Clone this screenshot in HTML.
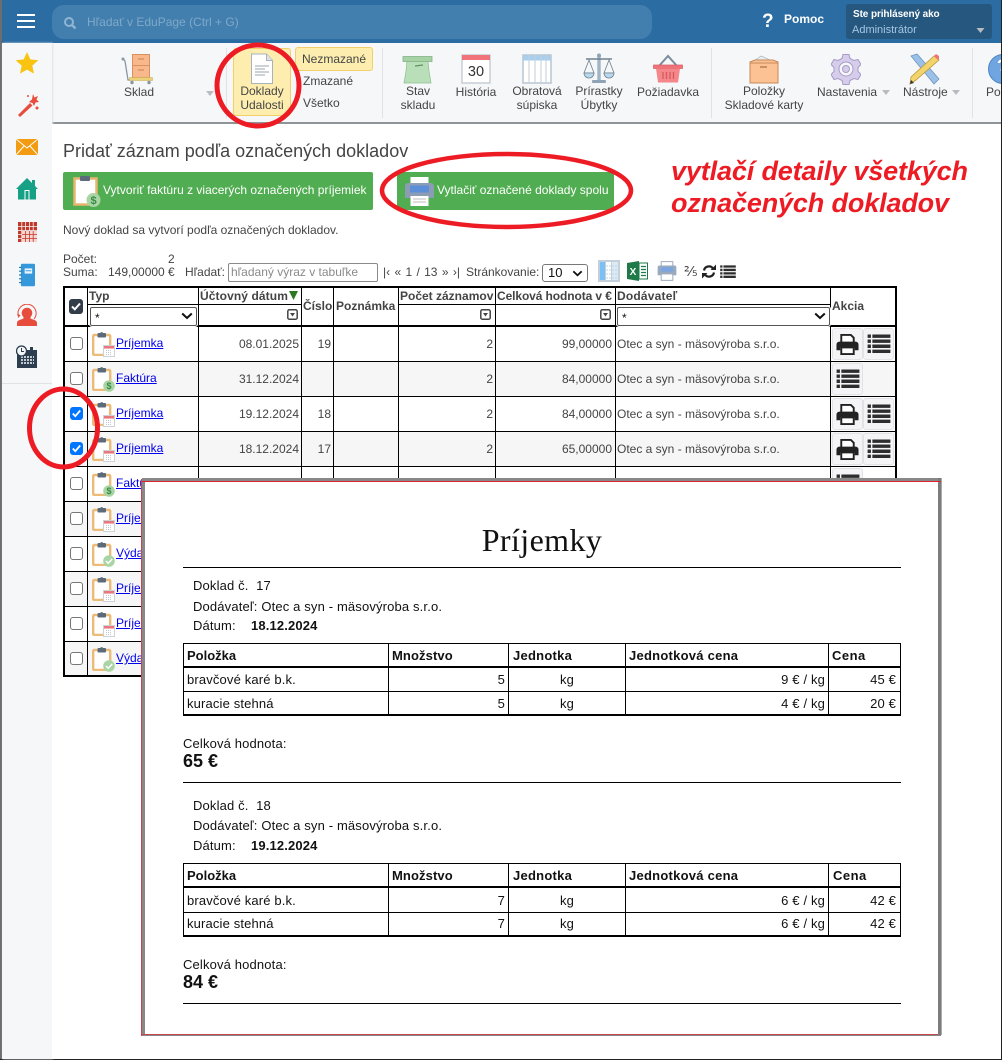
<!DOCTYPE html>
<html lang="sk"><head><meta charset="utf-8"><title>Príjemky</title>
<style>
html,body{margin:0;padding:0;background:#fff}
#p{position:relative;width:1003px;height:1060px;overflow:hidden;background:#fff;font:12px/16px "Liberation Sans",sans-serif;color:#444}
#p div,#p span.t,#p svg,#p a.t{position:absolute}
.t{white-space:nowrap}
.c{transform:translateX(-50%);text-align:center}
.r{transform:translateX(-100%)}
.b{font-weight:bold}
.ln{background:#000}
.row{left:63px;width:834px;height:35px}
.alt{background:#f6f6f6}
.cb{left:7px;top:11px;width:11px;height:11px;border:1.5px solid #767676;border-radius:3px;background:#fff}
.cb.on{background:#0075ff;border-color:#0075ff}
.lk{left:53px;top:9px;color:#00e;text-decoration:underline}
.act{width:29px;height:30px;top:2px;background:#f4f4f7;border:1px solid #e2e2e6;border-radius:3px}
.sel{height:17px;background:#fff;border:1px solid #555;border-radius:2px;box-shadow:0 0 0 1px #fff}
.blk{color:#111}
.m{font-size:13px;letter-spacing:.15px}
</style></head><body>
<div id="p">
<svg width="0" height="0" style="position:absolute">
<defs>
<symbol id="clip" viewBox="0 0 24 24"><rect x="1.200" y="3" width="17" height="20" rx="1" fill="#fff" stroke="#ecbb78" stroke-width="2.400"/><rect x="5.500" y="1" width="8.500" height="4.500" rx="1" fill="#5c6b7c"/><circle cx="9.700" cy="1.600" r="1.500" fill="#5c6b7c"/></symbol>
<symbol id="cal" viewBox="0 0 12 12"><rect x=".5" y=".5" width="11" height="11" fill="#fff" stroke="#ccd2d8"/><rect x="1" y="1" width="10" height="2.600" fill="#e8787c"/><path d="M3 5.500h6M3 7.500h6M3 9.500h6" stroke="#bfc8cf" stroke-dasharray="1 1"/></symbol>
<symbol id="dol" viewBox="0 0 12 12"><circle cx="6" cy="6" r="5.800" fill="#a9d5a5"/><text x="6" y="9.200" font-size="9" font-weight="bold" text-anchor="middle" fill="#3b8a46" font-family="Liberation Sans">$</text></symbol>
<symbol id="chk" viewBox="0 0 12 12"><circle cx="6" cy="6" r="5.800" fill="#a9d5a5"/><path d="M3 6l2.200 2.300L9.200 4" fill="none" stroke="#fff" stroke-width="1.500"/></symbol>
<symbol id="prt" viewBox="0 0 24 24"><path d="M5.500 10V2h10l3 3v5" fill="#fff" stroke="#222" stroke-width="2"/><path d="M3.500 9h17a3 3 0 0 1 3 3v6h-4v-3H4.500v3H.5v-6a3 3 0 0 1 3-3z" fill="#222"/><path d="M5.500 15h13v7h-13z" fill="#fff" stroke="#222" stroke-width="2"/></symbol>
<symbol id="lst" viewBox="0 0 24 20"><path d="M0 .5h3.500v3.600H0zM0 5.800h3.500v3.600H0zM0 11.100h3.500v3.600H0zM0 16.400h3.500v3.600H0zM5 .5h19v3.600H5zM5 5.800h19v3.600H5zM5 11.100h19v3.600H5zM5 16.400h19v3.600H5z" fill="#2d2d2d"/></symbol>
<symbol id="flt" viewBox="0 0 11 11"><rect x=".8" y=".8" width="9.400" height="9.400" rx="1.500" fill="#fff" stroke="#444" stroke-width="1.500"/><path d="M3 4h5L5.500 7.500z" fill="#444"/></symbol>
<symbol id="chev" viewBox="0 0 12 8"><path d="M1.200 1.500L6 6l4.800-4.500" fill="none" stroke="#111" stroke-width="2"/></symbol>
<symbol id="mini" viewBox="0 0 8 5"><path d="M0 0h8L4 5z" fill="#b8bcc0"/></symbol>
</defs></svg>

<!-- frame -->
<div style="left:0;top:0;width:2px;height:1060px;background:#6d6d6d"></div>
<div style="left:1001px;top:0;width:1px;height:1060px;background:#222"></div>
<div style="left:0;top:1059px;width:1003px;height:1px;background:#222"></div>

<!-- top bar -->
<div style="left:2px;top:0;width:999px;height:43px;background:#2b6ca3"></div>
<div style="left:17px;top:14px;width:18px;height:2px;background:#fff"></div>
<div style="left:17px;top:20px;width:18px;height:2px;background:#fff"></div>
<div style="left:17px;top:26px;width:18px;height:2px;background:#fff"></div>
<div style="left:52px;top:5px;width:600px;height:34px;background:#427fae;border-radius:12px"></div>
<svg style="left:63px;top:16px" width="14" height="14" viewBox="0 0 14 14"><circle cx="6" cy="6" r="4" fill="none" stroke="#8fb5d2" stroke-width="2"/><path d="M9 9l3.500 3.500" stroke="#8fb5d2" stroke-width="2.500"/></svg>
<span class="t" style="left:87px;top:14px;color:#7fa9c9">Hľadať v EduPage (Ctrl + G)</span>
<span class="t b" style="left:762px;top:11px;color:#fff;font-size:19px;line-height:22px">?</span>
<span class="t b" style="left:784px;top:11px;color:#fff">Pomoc</span>
<div style="left:846px;top:4px;width:146px;height:35px;background:#25577f;border-radius:3px"></div>
<span class="t b" style="left:853px;top:7px;color:#fff;font-size:10px;letter-spacing:-.1px">Ste prihlásený ako</span>
<span class="t" style="left:852px;top:22px;color:#a6c6e6;font-size:11px">Administrátor</span>
<svg style="left:976px;top:28px" width="9" height="5"><use href="#mini"/></svg>

<!-- toolbar -->
<div style="left:2px;top:43px;width:999px;height:80px;background:#f5f7f9"></div>
<div style="left:2px;top:122px;width:999px;height:2px;background:#8f9499"></div>
<div style="left:2px;top:43px;width:50px;height:1016px;background:#f5f7f9;box-shadow:1px 0 2px #dfe1e4"></div>
<div style="left:52px;top:124px;width:949px;height:935px;background:#fff"></div>
<div style="left:2px;top:383px;width:50px;height:1px;background:#dfe2e5"></div>
<div style="left:226px;top:48px;width:1px;height:70px;background:#e0e3e6"></div>
<div style="left:382px;top:48px;width:1px;height:70px;background:#e0e3e6"></div>
<div style="left:711px;top:48px;width:1px;height:70px;background:#e0e3e6"></div>
<div style="left:972px;top:48px;width:1px;height:70px;background:#e0e3e6"></div>

<!-- Sklad -->
<svg style="left:120px;top:52px" width="34" height="33" viewBox="0 0 34 33"><path d="M3 7l2 2 3 19 2 0" fill="none" stroke="#8b96a3" stroke-width="1.300"/><circle cx="3" cy="7" r="1.500" fill="#8b96a3"/><rect x="12.500" y="2.500" width="17" height="11" fill="#f9b88c" stroke="#d9925f"/><rect x="12.500" y="13.500" width="17" height="12" fill="#f9b88c" stroke="#d9925f"/><path d="M18 7h6M18 18h6" stroke="#c57f50"/><rect x="9.500" y="25.500" width="23" height="3" fill="#ecd178" stroke="#c9ad55" stroke-width=".5"/><circle cx="12" cy="30.500" r="1.700" fill="#8b96a3"/><circle cx="29" cy="30.500" r="1.700" fill="#8b96a3"/></svg>
<span class="t c" style="left:139px;top:84px">Sklad</span>
<svg style="left:206px;top:91px" width="8" height="5"><use href="#mini"/></svg>

<!-- Doklady -->
<div style="left:233px;top:48px;width:56px;height:66px;background:#fdeeb0;border:1px solid #f3cf6b;border-radius:3px"></div>
<svg style="left:250px;top:53px" width="24" height="32" viewBox="0 0 24 32"><path d="M1.500 1h15l6 6.500V30.500h-21z" fill="#fff" stroke="#a9b2bb"/><path d="M16.500 1v6.500h6" fill="#dfe3e7" stroke="#a9b2bb"/><path d="M5 13h14M5 16h10M5 19h14M5 22h10" stroke="#9aa4ae"/></svg>
<span class="t c" style="left:262px;top:84px;line-height:14px">Doklady<br>Udalosti</span>
<div style="left:295px;top:47px;width:76px;height:22px;background:#fdeeb0;border:1px solid #f3cf6b;border-radius:3px"></div>
<span class="t" style="left:302px;top:51px">Nezmazané</span>
<span class="t" style="left:303px;top:73px">Zmazané</span>
<span class="t" style="left:303px;top:95px">Všetko</span>

<!-- Stav skladu -->
<svg style="left:402px;top:55px" width="31" height="29" viewBox="0 0 31 29"><path d="M5 6h21l1 10 2 12H2l2-12z" fill="#b9dfb8" stroke="#8fbd90" stroke-width=".7"/><rect x="1" y="1.500" width="29" height="5" fill="#a6d2a6" stroke="#84b285" stroke-width=".8"/><path d="M13 11l8-1" stroke="#5f9363" stroke-width="1.200"/></svg>
<span class="t c" style="left:418px;top:84px;line-height:14px">Stav<br>skladu</span>
<!-- História -->
<svg style="left:461px;top:54px" width="30" height="30" viewBox="0 0 30 30"><rect x="1" y="1" width="28" height="28" fill="#fff" stroke="#c5ced6" stroke-width="1.500"/><rect x="1" y="1" width="28" height="5" fill="#ef7378"/><text x="15" y="22" font-size="14.500" text-anchor="middle" fill="#333" font-family="Liberation Sans">30</text></svg>
<span class="t c" style="left:476px;top:84px">História</span>
<!-- Obratova -->
<svg style="left:522px;top:54px" width="30" height="30" viewBox="0 0 30 30"><rect x="1" y="1" width="28" height="28" fill="#fff" stroke="#b9c6d2" stroke-width="1.500"/><rect x="1.500" y="1.500" width="27" height="5" fill="#a8d0ee"/><path d="M7 1v28M13 1v28M19 1v28M24 1v28" stroke="#c3ceda"/></svg>
<span class="t c" style="left:537px;top:84px;line-height:14px">Obratová<br>súpiska</span>
<!-- Scales -->
<svg style="left:583px;top:53px" width="32" height="32" viewBox="0 0 32 32"><rect x="14.300" y="3" width="3.400" height="25" fill="#9fb4c6"/><circle cx="16" cy="2.500" r="2" fill="#8ea3b5"/><rect x="9" y="27" width="14" height="3" rx="1" fill="#8ea3b5"/><path d="M3 6h26" stroke="#71808e" stroke-width="1.500"/><path d="M6 7L1 20h10zM26 7l-5 13h10z" fill="none" stroke="#71808e" stroke-width=".8"/><path d="M1 20a5 5 0 0 0 10 0zM21 20a5 5 0 0 0 10 0z" fill="#b8d8ee" stroke="#71808e" stroke-width=".8"/></svg>
<span class="t c" style="left:599px;top:84px;line-height:14px">Prírastky<br>Úbytky</span>
<!-- Basket -->
<svg style="left:653px;top:54px" width="30" height="30" viewBox="0 0 30 30"><path d="M6 12L15 2l9 10" fill="none" stroke="#7c8c9b" stroke-width="2"/><rect x="0.500" y="11" width="29" height="3.500" fill="#ef7378" stroke="#d85d62" stroke-width=".7"/><path d="M3 14.500h24l-2 14H5z" fill="#f58689"/><path d="M10 18v7M13.500 18v7M17 18v7M20.500 18v7" stroke="#d45a5f" stroke-width="1.300"/></svg>
<span class="t c" style="left:668px;top:84px">Požiadavka</span>
<!-- Box -->
<svg style="left:749px;top:54px" width="30" height="30" viewBox="0 0 30 30"><path d="M5 7l7-5 7 3 5 3z" fill="#e9edf1" stroke="#a9b2bb" stroke-width=".7"/><path d="M1 8l5-2h18l5 2v21H1z" fill="#fcc294" stroke="#c68858"/><path d="M1 9h28" stroke="#c68858"/><path d="M11 13h7" stroke="#b0764a" stroke-width="1.300"/></svg>
<span class="t c" style="left:764px;top:84px;line-height:14px">Položky<br>Skladové karty</span>
<!-- Gear -->
<svg style="left:831px;top:53px" width="30" height="32" viewBox="0 0 30 32"><path d="M12 1h6l1 4 4 2 4-1 3 5-3 3v4l3 3-3 5-4-1-4 2-1 4h-6l-1-4-4-2-4 1-3-5 3-3v-4L0 11l3-5 4 1 4-2z" transform="translate(0 .5)" fill="#d6cdea" stroke="#a89bc8"/><circle cx="15" cy="16" r="7" fill="#f5f7f9" stroke="#a89bc8"/><circle cx="15" cy="16" r="3.500" fill="#d6cdea" stroke="#a89bc8"/></svg>
<span class="t" style="left:817px;top:84px">Nastavenia</span>
<svg style="left:882px;top:90px" width="8" height="5"><use href="#mini"/></svg>
<!-- Tools -->
<svg style="left:908px;top:53px" width="32" height="32" viewBox="0 0 32 32"><path d="M3 3l6-2 22 25-5 5z" fill="#9cc1e8" stroke="#6f96bf" stroke-width=".8"/><path d="M26 3l5 4L8 27l-6 4 1-7z" fill="#f3d36b" stroke="#b99a3d" stroke-width=".8"/><path d="M26 3l2-2 3 2 0 3-1 1z" fill="#ef7378"/><path d="M2 31l1-4 3 3z" fill="#333"/></svg>
<span class="t" style="left:903px;top:84px">Nástroje</span>
<svg style="left:952px;top:90px" width="8" height="5"><use href="#mini"/></svg>
<!-- Pomoc clip -->
<div style="left:988px;top:54px;width:30px;height:30px;border-radius:50%;background:#6fa5e0;border:1px solid #4d86c4;box-sizing:border-box"></div>
<span class="t b" style="left:997px;top:56px;color:#fff;font-size:17px;line-height:20px">?</span>
<span class="t" style="left:986px;top:84px">Po</span>
<div style="left:1001px;top:43px;width:2px;height:1017px;background:#fff"></div>
<div style="left:1001px;top:0;width:1px;height:1060px;background:#222"></div>

<!-- sidebar -->
<svg style="left:15px;top:51px" width="24" height="24" viewBox="0 0 24 24"><path d="M12 1l3.300 7.400 8 .8-6 5.400 1.700 8L12 18.600 5 22.600l1.700-8-6-5.400 8-.8z" fill="#f9c311"/></svg>
<svg style="left:16px;top:93px" width="24" height="24" viewBox="0 0 24 24"><path d="M2 22L14 10l2.500 2.500L4 24z" fill="#e74c3c"/><path d="M17 1l1.500 3.500L22 3l-1.500 3.500L23 9l-3.500.5L18 13l-1.500-3L13 9l3-2.500z" fill="#e74c3c"/><circle cx="21" cy="15" r="1.500" fill="#e74c3c"/><circle cx="12" cy="3" r="1" fill="#e74c3c"/></svg>
<svg style="left:16px;top:139px" width="22" height="16" viewBox="0 0 22 16"><rect width="22" height="16" fill="#f39c12"/><path d="M0 0l11 9L22 0M0 16l8-9M22 16l-8-9" fill="none" stroke="#fff" stroke-width="1"/></svg>
<svg style="left:16px;top:178px" width="22" height="22" viewBox="0 0 22 22"><path d="M0 11L11 0l5 5V2h3v6l3 3h-2v10.500H2V11z" fill="#16a085"/><rect x="8.500" y="12" width="5" height="9.500" fill="#fff"/><rect x="9.500" y="13" width="3" height="8.500" fill="#16a085"/></svg>
<svg style="left:18px;top:222px" width="19" height="20" viewBox="0 0 19 20"><rect width="19" height="20" fill="#c0392b"/><path d="M0 4.500h19M0 8.500h19M0 12.500h19M0 16.500h19M3.800 0v20M7.600 0v20M11.400 0v20M15.200 0v20" stroke="#f5f7f9" stroke-width=".8"/><rect x="4" y="9" width="15" height="11" fill="#f6d5d1"/><path d="M4 12.500h15M4 16.500h15M7.600 9v11M11.400 9v11M15.200 9v11" stroke="#c0392b" stroke-width=".8"/></svg>
<svg style="left:19px;top:263px" width="16" height="24" viewBox="0 0 17 24"><rect x="2" y="0" width="15" height="24" rx="1.500" fill="#3498db"/><path d="M0 4h3M0 8h3M0 12h3M0 16h3M0 20h3" stroke="#2a78ad" stroke-width="1.200"/><rect x="6" y="5" width="8" height="5.500" fill="#eaf4fb"/><path d="M7 7.500h6" stroke="#3498db"/></svg>
<svg style="left:17px;top:304px" width="20" height="22" viewBox="0 0 20 22"><path d="M1.500 12A9 9 0 1 1 17 15" fill="none" stroke="#e74c3c" stroke-width="1"/><path d="M0 10l3.500 1-2 3z" fill="#e74c3c"/><circle cx="10" cy="9" r="5.300" fill="#e74c3c"/><path d="M0 22v-3c0-3 4.500-3.500 6.500-4.500v-2h7v2c2 1 6.500 1.500 6.500 4.500v3z" fill="#e74c3c"/></svg>
<svg style="left:16px;top:345px" width="22" height="23" viewBox="0 0 22 23"><rect x="1" y="5" width="20" height="18" fill="#2c3e50"/><rect x="14" y="2" width="3" height="5" fill="#2c3e50"/><path d="M5 12h13M5 15h13M5 18h13" stroke="#c3cad1" stroke-width="2" stroke-dasharray="2 1"/><circle cx="5.500" cy="6" r="5" fill="#f5f7f9" stroke="#2c3e50" stroke-width="1.300"/><path d="M5.500 3v3.500H8" fill="none" stroke="#2c3e50"/></svg>

<!-- heading -->
<span class="t" style="left:63px;top:141px;font-size:18px;line-height:21px">Pridať záznam podľa označených dokladov</span>

<div style="left:63px;top:172px;width:310px;height:38px;background:#51ad51;border-radius:2px"></div>
<svg style="left:73px;top:175px" width="28" height="33" viewBox="0 0 28 33"><rect x="1.500" y="3.500" width="22" height="26" fill="#fff" stroke="#e9b56e" stroke-width="2.500"/><rect x="7" y="1" width="10" height="5" rx="1" fill="#5c6b7c"/><circle cx="20.500" cy="25" r="7" fill="#a9d5a5"/><text x="20.500" y="29" font-size="11" font-weight="bold" text-anchor="middle" fill="#3b8a46" font-family="Liberation Sans">$</text></svg>
<span class="t" style="left:103px;top:182px;color:#fff">Vytvoriť faktúru z viacerých označených príjemiek</span>

<div style="left:397px;top:172px;width:217px;height:38px;background:#51ad51;border-radius:2px"></div>
<svg style="left:404px;top:176px" width="31" height="31" viewBox="0 0 31 31"><rect x="6.500" y="1" width="18" height="10" fill="#fff"/><path d="M4 7h23a3 3 0 0 1 3 3v12H1V10a3 3 0 0 1 3-3z" fill="#8b9cb4"/><rect x="6" y="9.500" width="19" height="7" fill="#5d8fd8"/><rect x="6.500" y="20" width="18" height="10" fill="#fff"/><path d="M9 23h13M9 26h13" stroke="#bbb"/></svg>
<span class="t" style="left:437px;top:182px;color:#fff">Vytlačiť označené doklady spolu</span>

<span class="t b" style="left:671px;top:155px;font-size:27px;line-height:32px;font-style:italic;color:#ed1c24;letter-spacing:-.14px">vytlačí detaily všetkých</span>
<span class="t b" style="left:671px;top:187px;font-size:27px;line-height:32px;font-style:italic;color:#ed1c24;letter-spacing:-.14px">označených dokladov</span>

<span class="t" style="left:63px;top:222px">Nový doklad sa vytvorí podľa označených dokladov.</span>

<span class="t" style="left:63px;top:251px">Počet:</span>
<span class="t" style="left:168px;top:251px">2</span>
<span class="t" style="left:63px;top:264px">Suma:</span>
<span class="t" style="left:108px;top:264px">149,00000 €</span>
<span class="t" style="left:185px;top:264px">Hľadať:</span>
<div style="left:228px;top:263px;width:148px;height:17px;border:1px solid #8a8a8a;border-radius:2px"></div>
<span class="t" style="left:231px;top:264px;color:#8a8a8a">hľadaný výraz v tabuľke</span>
<span class="t" style="left:383px;top:264px;word-spacing:1px">|‹ « 1 / 13 » ›|</span>
<span class="t" style="left:466px;top:264px">Stránkovanie:</span>
<div style="left:542px;top:264px;width:44px;height:16px;border:1px solid #777;border-radius:3px"></div>
<span class="t blk" style="left:548px;top:265px;font-size:13px">10</span>
<svg style="left:572px;top:270px" width="11" height="7"><use href="#chev"/></svg>

<svg style="left:598px;top:260px" width="22" height="22" viewBox="0 0 22 22"><rect width="22" height="22" fill="#c3d0dc"/><rect x="2" y="2" width="5" height="18" fill="#7cc0f5"/><rect x="8" y="2" width="5" height="18" fill="#fff"/><rect x="14" y="2" width="6" height="18" fill="#dce8f2"/><path d="M8 6h12M8 10h12M8 14h12M8 18h12" stroke="#b9d6ee" stroke-dasharray="2 1"/></svg>
<svg style="left:627px;top:261px" width="21" height="20" viewBox="0 0 21 20"><path d="M0 2l12-2v20L0 18z" fill="#1f7a4a"/><rect x="12" y="2" width="8.500" height="16" fill="#fff" stroke="#1f7a4a"/><path d="M14 5.500h5M14 8.500h5M14 11.500h5M14 14.500h5" stroke="#1f7a4a" stroke-width="1.300"/><text x="6" y="14" font-size="10" font-weight="bold" text-anchor="middle" fill="#fff" font-family="Liberation Sans">X</text></svg>
<svg style="left:657px;top:261px" width="20" height="20" viewBox="0 0 31 31"><rect x="6.500" y="1" width="18" height="10" fill="#fff" stroke="#9aa9bb" stroke-width="1.500"/><path d="M4 7h23a3 3 0 0 1 3 3v12H1V10a3 3 0 0 1 3-3z" fill="#9aa9bb"/><rect x="6" y="9.500" width="19" height="7" fill="#7aa5e0"/><rect x="6.500" y="20" width="18" height="10" fill="#fff" stroke="#9aa9bb" stroke-width="1.500"/></svg>
<span class="t" style="left:684px;top:263px;font-size:14px;color:#444">⅖</span>
<svg style="left:702px;top:264px" width="14" height="15" viewBox="0 0 14 14"><path d="M2 6a5 5 0 0 1 9-2M12 8a5 5 0 0 1-9 2" fill="none" stroke="#222" stroke-width="2.200"/><path d="M8.500 5.500H14V0zM5.500 8.500H0V14z" fill="#222"/></svg>
<svg style="left:720px;top:265px" width="16" height="13"><use href="#lst"/></svg>

<!-- main table rows -->
<div class="row" style="top:326px"><div class="cb" style="left:7px"></div><svg style="left:29px;top:6px" width="24" height="24"><use href="#clip"/></svg><svg style="left:40px;top:19px" width="12" height="12"><use href="#cal"/></svg><a class="t lk">Príjemka</a><span class="t r" style="left:236px;top:10px">08.01.2025</span><span class="t r" style="left:268px;top:10px">19</span><span class="t r" style="left:430px;top:10px">2</span><span class="t r" style="left:549px;top:10px">99,00000</span><span class="t" style="left:554px;top:10px">Otec a syn - mäsovýroba s.r.o.</span><div class="act" style="left:769px"><svg style="left:3px;top:4px" width="23" height="23"><use href="#prt"/></svg></div><div class="act" style="left:800px"><svg style="left:3px;top:5px" width="24" height="19"><use href="#lst"/></svg></div></div>

<div class="row alt" style="top:361px"><div class="cb"></div><svg style="left:29px;top:6px" width="24" height="24"><use href="#clip"/></svg><svg style="left:40px;top:19px" width="12" height="12"><use href="#dol"/></svg><a class="t lk">Faktúra</a><span class="t r" style="left:236px;top:10px">31.12.2024</span><span class="t r" style="left:430px;top:10px">2</span><span class="t r" style="left:549px;top:10px">84,00000</span><span class="t" style="left:554px;top:10px">Otec a syn - mäsovýroba s.r.o.</span><div class="act" style="left:769px"><svg style="left:3px;top:5px" width="24" height="19"><use href="#lst"/></svg></div></div>

<div class="row" style="top:396px"><div class="cb on"><svg style="left:1px;top:1px" width="9" height="9" viewBox="0 0 9 9"><path d="M.8 4.500l2.500 2.700L8.200 1.500" fill="none" stroke="#fff" stroke-width="1.800"/></svg></div><svg style="left:29px;top:6px" width="24" height="24"><use href="#clip"/></svg><svg style="left:40px;top:19px" width="12" height="12"><use href="#cal"/></svg><a class="t lk">Príjemka</a><span class="t r" style="left:236px;top:10px">19.12.2024</span><span class="t r" style="left:268px;top:10px">18</span><span class="t r" style="left:430px;top:10px">2</span><span class="t r" style="left:549px;top:10px">84,00000</span><span class="t" style="left:554px;top:10px">Otec a syn - mäsovýroba s.r.o.</span><div class="act" style="left:769px"><svg style="left:3px;top:4px" width="23" height="23"><use href="#prt"/></svg></div><div class="act" style="left:800px"><svg style="left:3px;top:5px" width="24" height="19"><use href="#lst"/></svg></div></div>

<div class="row alt" style="top:431px"><div class="cb on"><svg style="left:1px;top:1px" width="9" height="9" viewBox="0 0 9 9"><path d="M.8 4.500l2.500 2.700L8.200 1.500" fill="none" stroke="#fff" stroke-width="1.800"/></svg></div><svg style="left:29px;top:6px" width="24" height="24"><use href="#clip"/></svg><svg style="left:40px;top:19px" width="12" height="12"><use href="#cal"/></svg><a class="t lk">Príjemka</a><span class="t r" style="left:236px;top:10px">18.12.2024</span><span class="t r" style="left:268px;top:10px">17</span><span class="t r" style="left:430px;top:10px">2</span><span class="t r" style="left:549px;top:10px">65,00000</span><span class="t" style="left:554px;top:10px">Otec a syn - mäsovýroba s.r.o.</span><div class="act" style="left:769px"><svg style="left:3px;top:4px" width="23" height="23"><use href="#prt"/></svg></div><div class="act" style="left:800px"><svg style="left:3px;top:5px" width="24" height="19"><use href="#lst"/></svg></div></div>

<div class="row" style="top:466px"><div class="cb"></div><svg style="left:29px;top:6px" width="24" height="24"><use href="#clip"/></svg><svg style="left:40px;top:19px" width="12" height="12"><use href="#dol"/></svg><a class="t lk">Faktúra</a><div class="act" style="left:769px"><svg style="left:3px;top:5px" width="24" height="19"><use href="#lst"/></svg></div></div>

<div class="row alt" style="top:501px"><div class="cb"></div><svg style="left:29px;top:6px" width="24" height="24"><use href="#clip"/></svg><svg style="left:40px;top:19px" width="12" height="12"><use href="#cal"/></svg><a class="t lk">Príjemka</a></div>
<div class="row" style="top:536px"><div class="cb"></div><svg style="left:29px;top:6px" width="24" height="24"><use href="#clip"/></svg><svg style="left:40px;top:19px" width="12" height="12"><use href="#chk"/></svg><a class="t lk">Výdajka</a></div>
<div class="row alt" style="top:571px"><div class="cb"></div><svg style="left:29px;top:6px" width="24" height="24"><use href="#clip"/></svg><svg style="left:40px;top:19px" width="12" height="12"><use href="#cal"/></svg><a class="t lk">Príjemka</a></div>
<div class="row" style="top:606px"><div class="cb"></div><svg style="left:29px;top:6px" width="24" height="24"><use href="#clip"/></svg><svg style="left:40px;top:19px" width="12" height="12"><use href="#cal"/></svg><a class="t lk">Príjemka</a></div>
<div class="row alt" style="top:641px"><div class="cb"></div><svg style="left:29px;top:6px" width="24" height="24"><use href="#clip"/></svg><svg style="left:40px;top:19px" width="12" height="12"><use href="#chk"/></svg><a class="t lk">Výdajka</a></div>

<!-- grid lines -->
<div class="ln" style="left:63px;top:286px;width:834px;height:2px"></div>
<div class="ln" style="left:63px;top:325px;width:834px;height:2px"></div>
<div class="ln" style="left:63px;top:675px;width:834px;height:2px"></div>
<div class="ln" style="left:63px;top:286px;width:2px;height:391px"></div>
<div class="ln" style="left:895px;top:286px;width:2px;height:391px"></div>
<div class="ln" style="left:87px;top:286px;width:1px;height:391px"></div>
<div class="ln" style="left:198px;top:286px;width:1px;height:391px"></div>
<div class="ln" style="left:301px;top:286px;width:1px;height:391px"></div>
<div class="ln" style="left:333px;top:286px;width:1px;height:391px"></div>
<div class="ln" style="left:398px;top:286px;width:1px;height:391px"></div>
<div class="ln" style="left:495px;top:286px;width:1px;height:391px"></div>
<div class="ln" style="left:615px;top:286px;width:1px;height:391px"></div>
<div class="ln" style="left:830px;top:286px;width:1px;height:391px"></div>
<div class="ln" style="left:87px;top:304px;width:111px;height:1px"></div>
<div class="ln" style="left:198px;top:304px;width:103px;height:1px"></div>
<div class="ln" style="left:398px;top:304px;width:432px;height:1px"></div>
<div class="ln" style="left:63px;top:361px;width:834px;height:1px"></div>
<div class="ln" style="left:63px;top:396px;width:834px;height:1px"></div>
<div class="ln" style="left:63px;top:431px;width:834px;height:1px"></div>
<div class="ln" style="left:63px;top:466px;width:834px;height:1px"></div>
<div class="ln" style="left:63px;top:501px;width:834px;height:1px"></div>
<div class="ln" style="left:63px;top:536px;width:834px;height:1px"></div>
<div class="ln" style="left:63px;top:571px;width:834px;height:1px"></div>
<div class="ln" style="left:63px;top:606px;width:834px;height:1px"></div>
<div class="ln" style="left:63px;top:641px;width:834px;height:1px"></div>

<!-- header -->
<div style="left:69px;top:299px;width:14px;height:15px;border-radius:3px;background:#333d47"></div>
<svg style="left:71px;top:302px" width="10" height="9" viewBox="0 0 10 9"><path d="M1 4.500l2.800 2.800L9 1.500" fill="none" stroke="#fff" stroke-width="2"/></svg>
<span class="t b" style="left:89px;top:288px">Typ</span>
<span class="t b" style="left:200px;top:288px;letter-spacing:.1px">Účtovný dátum</span>
<svg style="left:289px;top:291px" width="10" height="9"><path d="M0 0h9L4.500 9z" fill="#2c7a20"/></svg>
<span class="t b" style="left:303px;top:298px">Číslo</span>
<span class="t b" style="left:336px;top:298px">Poznámka</span>
<span class="t b" style="left:400px;top:288px">Počet záznamov</span>
<span class="t b" style="left:497px;top:288px;letter-spacing:-.1px">Celková hodnota v €</span>
<span class="t b" style="left:617px;top:288px;letter-spacing:.2px">Dodávateľ</span>
<span class="t b" style="left:832px;top:298px">Akcia</span>
<div class="sel" style="left:90px;top:307px;width:105px"></div>
<span class="t blk" style="left:95px;top:310px">*</span>
<svg style="left:181px;top:312px" width="12" height="8"><use href="#chev"/></svg>
<svg style="left:287px;top:309px" width="11" height="11"><use href="#flt"/></svg>
<svg style="left:480px;top:309px" width="11" height="11"><use href="#flt"/></svg>
<svg style="left:600px;top:309px" width="11" height="11"><use href="#flt"/></svg>
<div class="sel" style="left:617px;top:307px;width:211px"></div>
<span class="t blk" style="left:622px;top:310px">*</span>
<svg style="left:814px;top:312px" width="12" height="8"><use href="#chev"/></svg>

<!-- popup -->
<div style="left:144px;top:481px;width:794px;height:553px;background:#fff"></div>
<div style="left:142px;top:478px;width:800px;height:4px;background:#888"></div>
<div style="left:142px;top:478px;width:3px;height:558px;background:#888"></div>
<div style="left:141px;top:479px;width:1px;height:557px;background:#c8474f"></div>
<div style="left:938px;top:478px;width:3px;height:557px;background:#7c7c7c"></div>
<div style="left:941px;top:478px;width:1px;height:557px;background:#aaa"></div>
<div style="left:142px;top:1035px;width:799px;height:1px;background:#888"></div>
<div style="left:142px;top:481px;width:799px;height:1px;background:#e0202c"></div>
<div style="left:142px;top:1034px;width:796px;height:1px;background:#c8474f"></div>

<span class="t c" style="left:542px;top:521px;font:32px/38px 'Liberation Serif',serif;color:#111;letter-spacing:.4px">Príjemky</span>
<div class="ln" style="left:183px;top:567px;width:718px;height:1px"></div>

<span class="t blk m" style="left:193px;top:578px">Doklad č.&nbsp; 17</span>
<span class="t blk m" style="left:193px;top:599px">Dodávateľ: Otec a syn - mäsovýroba s.r.o.</span>
<span class="t blk m" style="left:193px;top:618px">Dátum:</span>
<span class="t b blk m" style="left:251px;top:618px">18.12.2024</span>

<div class="ln" style="left:183px;top:643px;width:718px;height:1px"></div>
<div class="ln" style="left:183px;top:666px;width:718px;height:2px"></div>
<div class="ln" style="left:183px;top:691px;width:718px;height:1px"></div>
<div class="ln" style="left:183px;top:714px;width:718px;height:2px"></div>
<div class="ln" style="left:183px;top:643px;width:1px;height:73px"></div>
<div class="ln" style="left:388px;top:643px;width:1px;height:73px"></div>
<div class="ln" style="left:508px;top:643px;width:1px;height:73px"></div>
<div class="ln" style="left:625px;top:643px;width:1px;height:73px"></div>
<div class="ln" style="left:828px;top:643px;width:1px;height:73px"></div>
<div class="ln" style="left:900px;top:643px;width:1px;height:73px"></div>
<span class="t b blk" style="left:187px;top:648px;font-size:13px">Položka</span>
<span class="t b blk" style="left:392px;top:648px;font-size:13px;letter-spacing:.1px">Množstvo</span>
<span class="t b blk" style="left:513px;top:648px;font-size:13px;letter-spacing:.25px">Jednotka</span>
<span class="t b blk" style="left:629px;top:648px;font-size:13px;letter-spacing:.25px">Jednotková cena</span>
<span class="t b blk" style="left:832px;top:648px;font-size:13px;letter-spacing:.5px">Cena</span>
<span class="t blk m" style="left:187px;top:672px">bravčové karé b.k.</span><span class="t r blk m" style="left:505px;top:672px">5</span><span class="t c blk m" style="left:567px;top:672px">kg</span><span class="t r blk m" style="left:825px;top:672px">9 € / kg</span><span class="t r blk m" style="left:896px;top:672px">45 €</span>
<span class="t blk m" style="left:187px;top:696px">kuracie stehná</span><span class="t r blk m" style="left:505px;top:696px">5</span><span class="t c blk m" style="left:567px;top:696px">kg</span><span class="t r blk m" style="left:825px;top:696px">4 € / kg</span><span class="t r blk m" style="left:896px;top:696px">20 €</span>

<span class="t blk m" style="left:183px;top:736px">Celková hodnota:</span>
<span class="t b blk" style="left:183px;top:751px;font-size:18px;line-height:21px">65 €</span>
<div class="ln" style="left:183px;top:782px;width:718px;height:1px"></div>

<span class="t blk m" style="left:193px;top:798px">Doklad č.&nbsp; 18</span>
<span class="t blk m" style="left:193px;top:818px">Dodávateľ: Otec a syn - mäsovýroba s.r.o.</span>
<span class="t blk m" style="left:193px;top:838px">Dátum:</span>
<span class="t b blk m" style="left:251px;top:838px">19.12.2024</span>

<div class="ln" style="left:183px;top:863px;width:718px;height:1px"></div>
<div class="ln" style="left:183px;top:886px;width:718px;height:2px"></div>
<div class="ln" style="left:183px;top:912px;width:718px;height:1px"></div>
<div class="ln" style="left:183px;top:935px;width:718px;height:2px"></div>
<div class="ln" style="left:183px;top:863px;width:1px;height:74px"></div>
<div class="ln" style="left:388px;top:863px;width:1px;height:74px"></div>
<div class="ln" style="left:508px;top:863px;width:1px;height:74px"></div>
<div class="ln" style="left:625px;top:863px;width:1px;height:74px"></div>
<div class="ln" style="left:828px;top:863px;width:1px;height:74px"></div>
<div class="ln" style="left:900px;top:863px;width:1px;height:74px"></div>
<span class="t b blk" style="left:187px;top:868px;font-size:13px">Položka</span>
<span class="t b blk" style="left:392px;top:868px;font-size:13px;letter-spacing:.1px">Množstvo</span>
<span class="t b blk" style="left:513px;top:868px;font-size:13px;letter-spacing:.25px">Jednotka</span>
<span class="t b blk" style="left:629px;top:868px;font-size:13px;letter-spacing:.25px">Jednotková cena</span>
<span class="t b blk" style="left:833px;top:868px;font-size:13px;letter-spacing:.5px">Cena</span>
<span class="t blk m" style="left:187px;top:893px">bravčové karé b.k.</span><span class="t r blk m" style="left:505px;top:893px">7</span><span class="t c blk m" style="left:567px;top:893px">kg</span><span class="t r blk m" style="left:825px;top:893px">6 € / kg</span><span class="t r blk m" style="left:896px;top:893px">42 €</span>
<span class="t blk m" style="left:187px;top:916px">kuracie stehná</span><span class="t r blk m" style="left:505px;top:916px">7</span><span class="t c blk m" style="left:567px;top:916px">kg</span><span class="t r blk m" style="left:825px;top:916px">6 € / kg</span><span class="t r blk m" style="left:896px;top:916px">42 €</span>

<span class="t blk m" style="left:183px;top:957px">Celková hodnota:</span>
<span class="t b blk" style="left:183px;top:972px;font-size:18px;line-height:21px">84 €</span>
<div class="ln" style="left:183px;top:1003px;width:718px;height:1px"></div>

<!-- annotations -->
<svg style="left:0;top:0" width="1003" height="1060" viewBox="0 0 1003 1060">
<ellipse cx="258" cy="85.500" rx="41" ry="40.500" fill="none" stroke="#ed1c24" stroke-width="5"/>
<ellipse cx="506.500" cy="190.500" rx="124.500" ry="36.500" fill="none" stroke="#ed1c24" stroke-width="4.500"/>
<ellipse cx="63.500" cy="428" rx="34" ry="39" fill="none" stroke="#ed1c24" stroke-width="5"/>
</svg>
</div>
</body></html>
